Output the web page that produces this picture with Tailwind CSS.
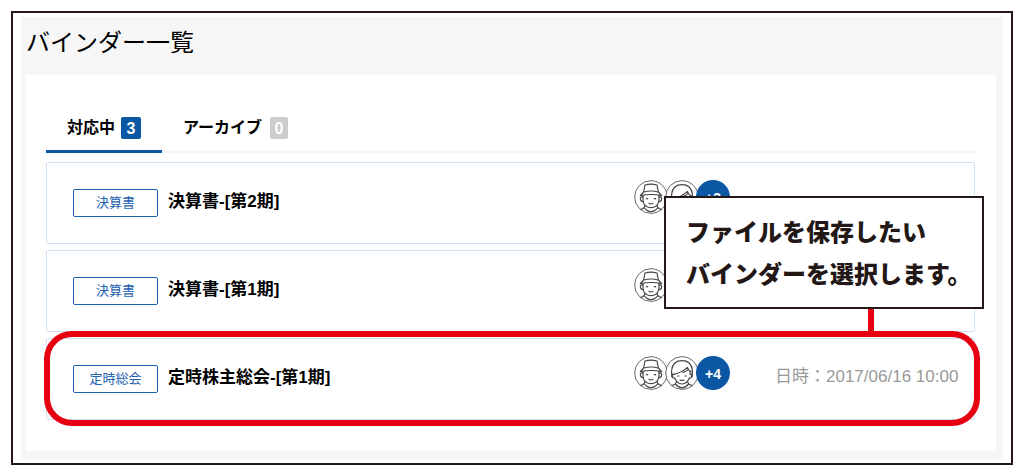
<!DOCTYPE html>
<html lang="ja">
<head>
  <meta charset="UTF-8">
  <meta name="viewport" content="width=device-width, initial-scale=1">
  <title>バインダー一覧</title>
  <script src="https://cdn.jsdelivr.net/npm/@tailwindcss/browser@4"></script>
</head>
<body class="bg-white text-black font-['Liberation_Sans','Noto_Sans_CJK_JP',sans-serif]">

<!-- Avatar drawings -->
<svg class="hidden">
  <symbol id="man" viewBox="0 0 102 102">
    <g fill="none" stroke="#444" stroke-width="3.5" stroke-linejoin="round" stroke-linecap="round">
      <circle cx="51" cy="51" r="49" fill="#fff" stroke="#666" stroke-width="3"/>
      <path d="M29 36 L33 15 Q51 10 69 15 L73 36"/>
      <path d="M29 36 Q51 30 73 36 L83 47 Q51 40 19 47 Z"/>
      <path d="M27 47 V60 Q28 75 41 81 Q51 85 61 81 Q74 75 75 60 V47"/>
      <path d="M27 51 Q18 49 19 57 Q20 65 28 65 M75 51 Q84 49 83 57 Q82 65 74 65"/>
      <path d="M37 56 H41 M61 56 H65 M45 70 Q51 74 57 70"/>
      <path d="M33 77 L30 83 Q51 107 72 83 L69 77 M30 83 L19 89 M72 83 L83 89"/>
    </g>
  </symbol>
  <symbol id="woman" viewBox="0 0 102 102">
    <g fill="none" stroke="#444" stroke-width="3.5" stroke-linejoin="round" stroke-linecap="round">
      <circle cx="51" cy="51" r="49" fill="#fff" stroke="#666" stroke-width="3"/>
      <path d="M23 62 Q18 54 20 42 Q24 14 51 14 Q78 14 82 42 Q84 54 79 62"/>
      <path d="M22 56 Q52 50 67 34 Q70 44 80 48"/>
      <path d="M54 49 Q65 46 70 40"/>
      <path d="M27 55 Q19 54 20 61 Q22 67 29 66 Q33 77 42 82 Q51 86 60 82 Q69 77 73 66 Q80 67 82 61 Q83 54 75 55 V48"/>
      <path d="M38 60 H42 M60 60 H64 M45 72 Q51 75 57 72"/>
      <path d="M34 78 L31 84 Q51 107 71 84 L68 78 M31 84 L20 89 M71 84 L82 89"/>
    </g>
  </symbol>
</svg>

<div class="m-[11px] border-2 border-[#231815] px-2 py-1">
  <div class="bg-[#f6f6f6] pb-2 pl-[5px] pr-[7px]">

    <!-- Header -->
    <header class="flex h-[58px] items-center pb-2.5">
      <h1 class="text-2xl font-['Noto_Sans_CJK_JP',sans-serif]">バインダー一覧</h1>
    </header>

    <main class="bg-white pt-[30px] pr-[21px] pb-[31px] pl-5">
      <!-- Tabs -->
      <nav class="flex border-b-2 border-[#f5f5f5] font-bold leading-6">
        <a href="#" class="-mb-0.5 flex h-12 items-center gap-1.5 border-b-3 border-[#0b57a4] px-[21px]">
          対応中
          <span class="h-[22px] w-5 rounded-xs bg-[#0b57a4] text-center text-white">3</span>
        </a>
        <a href="#" class="flex h-[45px] items-center gap-2 px-[21px]">
          アーカイブ
          <span class="h-[22px] w-[18px] rounded-xs bg-[#ccc] text-center text-white">0</span>
        </a>
      </nav>

      <!-- Binder list -->
      <ul class="mt-[9px] flex flex-col gap-1.5 text-[17px] leading-6">
        <li>
          <a href="#" class="flex h-[82px] items-center rounded-xs border border-[#cfe1f2] pr-4 pl-[26px]">
            <span class="h-7 w-[85px] rounded-xs border border-[#1c62b0] text-center text-[13px] leading-[26px] text-[#1c62b0]">決算書</span>
            <span class="ml-2.5 flex-1 pb-0.5 font-bold">決算書-[第2期]</span>
            <span class="mr-[45px] flex w-24 pb-3">
              <svg class="size-[34px] shrink-0"><use href="#man"/></svg>
              <svg class="-ml-[3px] size-[34px] shrink-0"><use href="#woman"/></svg>
              <span class="-ml-[3px] size-[34px] shrink-0 rounded-full bg-[#0b57a4] text-center text-sm leading-9 font-bold text-white">+3</span>
            </span>
            <span class="w-[183px]"></span>
          </a>
        </li>
        <li>
          <a href="#" class="flex h-[82px] items-center rounded-xs border border-[#cfe1f2] pr-4 pl-[26px]">
            <span class="h-7 w-[85px] rounded-xs border border-[#1c62b0] text-center text-[13px] leading-[26px] text-[#1c62b0]">決算書</span>
            <span class="ml-2.5 flex-1 pb-0.5 font-bold">決算書-[第1期]</span>
            <span class="mr-[45px] flex w-24 pb-3">
              <svg class="size-[34px] shrink-0"><use href="#man"/></svg>
              <svg class="-ml-[3px] size-[34px] shrink-0"><use href="#woman"/></svg>
            </span>
            <span class="w-[183px]"></span>
          </a>
        </li>
        <li class="relative">
          <a href="#" class="flex h-[82px] items-center rounded-xs border border-[#cfe1f2] pr-4 pl-[26px]">
            <span class="h-7 w-[85px] rounded-xs border border-[#1c62b0] text-center text-[13px] leading-[26px] text-[#1c62b0]">定時総会</span>
            <span class="ml-2.5 flex-1 pb-0.5 font-bold">定時株主総会-[第1期]</span>
            <span class="mr-[45px] flex w-24 pb-3">
              <svg class="size-[34px] shrink-0"><use href="#man"/></svg>
              <svg class="-ml-[3px] size-[34px] shrink-0"><use href="#woman"/></svg>
              <span class="-ml-[3px] size-[34px] shrink-0 rounded-full bg-[#0b57a4] text-center text-sm leading-9 font-bold text-white">+4</span>
            </span>
            <span class="w-[183px] pb-1 whitespace-nowrap text-[#999]">日時：<time datetime="2017-06-16T10:00">2017/06/16 10:00</time></span>
          </a>

          <!-- Highlight ring, connector and callout -->
          <div class="pointer-events-none absolute -top-[7px] -right-[5px] -bottom-1.5 -left-0.5 rounded-[28px] border-6 border-[#e60012]"></div>
          <div class="absolute right-[101px] bottom-full mb-1 h-[26px] w-1.5 bg-[#e60012]"></div>
          <p class="absolute -right-[9px] bottom-full mb-[29px] h-[113px] w-80 border-2 border-[#231815] bg-white pt-3 pl-5 text-2xl leading-[42px] font-black whitespace-nowrap text-[#231815] font-['Noto_Sans_CJK_JP',sans-serif]">ファイルを保存したい<br>バインダーを選択します。</p>
        </li>
      </ul>
    </main>
  </div>
</div>

</body>
</html>
